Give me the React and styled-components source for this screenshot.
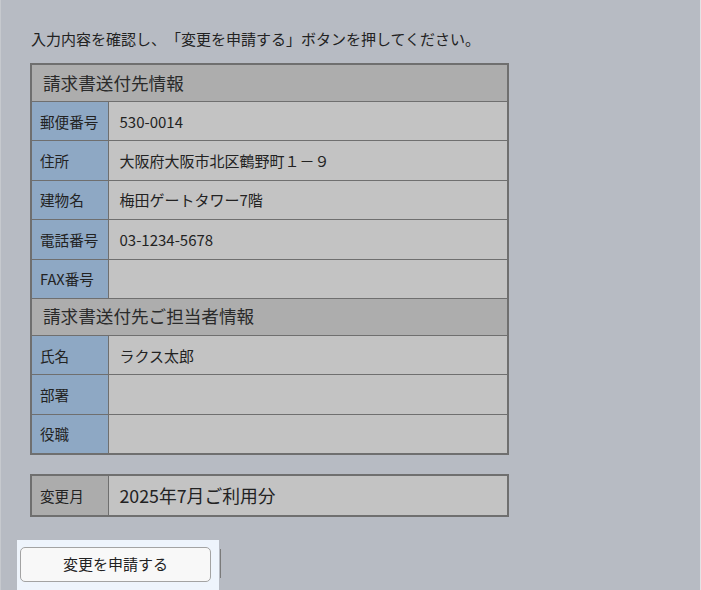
import styled, { createGlobalStyle } from "styled-components";

const GlobalStyle = createGlobalStyle`
  html, body {
    margin: 0;
    padding: 0;
    background: #b7bbc3;
  }
  body {
    font-family: "Noto Sans CJK JP", "Noto Sans", sans-serif;
    color: #222;
    text-spacing-trim: space-all;
  }
`;

const Page = styled.div`
  width: 701px;
  height: 590px;
  box-sizing: border-box;
  border-left: 1px solid #c6c9ce;
  border-right: 1px solid #e2e3e5;
  overflow: hidden;
  padding: 28px 0 0 29px;
`;

const Lead = styled.p`
  margin: 0 0 13px 1px;
  font-size: 15px;
  line-height: 22px;
  color: #222;
`;

const Table = styled.table`
  width: 479px;
  border-collapse: collapse;
  table-layout: fixed;
  border: 2px solid #6f6f6f;
  margin-bottom: ${(p) => p.$gap || 0}px;
`;

const HeadCell = styled.th`
  height: 34px;
  padding: 0 0 2px 11px;
  background: #adadad;
  border: 1px solid #6f6f6f;
  text-align: left;
  font-weight: 400;
  font-size: 17.6px;
  color: #2a2a2a;
`;

const Label = styled.th`
  height: 38.4px;
  padding: 0 0 0 8px;
  background: ${(p) => (p.$plain ? "#acacac" : "#8ea8c4")};
  border: 1px solid #6f6f6f;
  text-align: left;
  font-weight: 400;
  font-size: 14.6px;
  color: #222;
  white-space: nowrap;
`;

const Value = styled.td`
  padding: 0 0 0 11px;
  background: #c3c3c3;
  border: 1px solid #6f6f6f;
  font-size: ${(p) => (p.$big ? 17.8 : 15)}px;
  color: #222;
`;

const Footer = styled.div`
  display: flex;
  align-items: flex-start;
  margin-left: -13px;
`;

const ButtonPanel = styled.div`
  width: 202px;
  height: 60px;
  box-sizing: border-box;
  padding: 7px 0 0 3px;
  background: #eef4fc;
`;

const Button = styled.button`
  width: 191px;
  height: 35px;
  border: 1px solid #a3a3a3;
  border-radius: 5px;
  background: #f8f8f8;
  font-family: inherit;
  font-size: 15px;
  color: #222;
  padding: 0 0 1px;
  cursor: pointer;
`;

const Edge = styled.div`
  width: 1px;
  height: 29px;
  margin: 9px 0 0 1px;
  background: #7a7a7a;
`;

const sender = [
  ["郵便番号", "530-0014"],
  ["住所", "大阪府大阪市北区鶴野町１－９"],
  ["建物名", "梅田ゲートタワー7階"],
  ["電話番号", "03-1234-5678"],
  ["FAX番号", ""],
];

const contact = [
  ["氏名", "ラクス太郎"],
  ["部署", ""],
  ["役職", ""],
];

const Cols = () => (
  <colgroup>
    <col style={{ width: 77 }} />
    <col />
  </colgroup>
);

const Rows = ({ items }) =>
  items.map(([k, v]) => (
    <tr key={k}>
      <Label>{k}</Label>
      <Value>{v}</Value>
    </tr>
  ));

export default function App() {
  return (
    <>
      <GlobalStyle />
      <Page>
        <Lead>入力内容を確認し、「変更を申請する」ボタンを押してください。</Lead>
        <Table $gap={19}>
          <Cols />
          <tbody>
            <tr>
              <HeadCell colSpan={2}>請求書送付先情報</HeadCell>
            </tr>
            <Rows items={sender} />
            <tr>
              <HeadCell colSpan={2}>請求書送付先ご担当者情報</HeadCell>
            </tr>
            <Rows items={contact} />
          </tbody>
        </Table>
        <Table $gap={23}>
          <Cols />
          <tbody>
            <tr>
              <Label $plain>変更月</Label>
              <Value $big>2025年7月ご利用分</Value>
            </tr>
          </tbody>
        </Table>
        <Footer>
          <ButtonPanel>
            <Button>変更を申請する</Button>
          </ButtonPanel>
          <Edge />
        </Footer>
      </Page>
    </>
  );
}
